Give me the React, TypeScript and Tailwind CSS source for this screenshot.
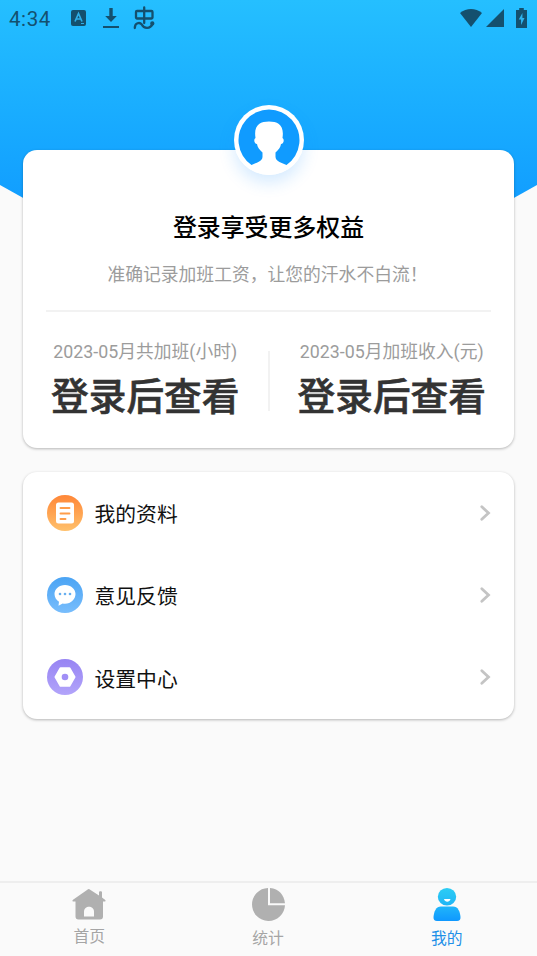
import { useState } from 'react';
import type { ReactNode } from 'react';
import { clsx } from 'clsx';

type TabKey = 'home' | 'stats' | 'mine';

const STATS = [
  { label: '2023-05月共加班(小时)', value: '登录后查看' },
  { label: '2023-05月加班收入(元)', value: '登录后查看' },
];

const MENU: { label: string; icon: ReactNode }[] = [
  { label: '我的资料', icon: <ProfileIcon /> },
  { label: '意见反馈', icon: <FeedbackIcon /> },
  { label: '设置中心', icon: <SettingsIcon /> },
];

const TABS: { key: TabKey; label: string; icon: ReactNode }[] = [
  { key: 'home', label: '首页', icon: <HomeIcon /> },
  { key: 'stats', label: '统计', icon: <PieIcon /> },
  { key: 'mine', label: '我的', icon: <MineIcon /> },
];

export default function App() {
  const [tab, setTab] = useState<TabKey>('mine');

  return (
    <div className="flex h-[956px] w-[537px] flex-col overflow-hidden bg-[#fafafa] font-[Roboto,'Noto_Sans_CJK_SC',sans-serif]">
      <header className="h-[215px] shrink-0 bg-linear-to-b from-[#25bfff] to-[#129fff] to-90% [clip-path:polygon(0_0,100%_0,100%_185px,90%_100%,10%_100%,0_185px)]">
        <StatusBar />
      </header>

      <main className="relative -mt-[65.5px] flex flex-1 flex-col gap-6 px-[23px]">
        {/* 登录卡片 */}
        <section className="flex h-[298px] flex-col items-center rounded-[14px] bg-white px-[23px] shadow-[0_1px_3px_rgba(0,0,0,0.28)]">
          <Avatar />
          <h1 className="mt-[35px] text-[23.9px] leading-9 font-medium text-black">登录享受更多权益</h1>
          <p className="mt-[15px] pr-0.5 text-[17.8px] leading-7 text-[#9c9c9c]">准确记录加班工资，让您的汗水不白流！</p>
          <div className="mt-[21px] h-0.5 w-full shrink-0 bg-[#f2f2f2]" />
          <div className="mt-[26px] flex w-[493px] items-center">
            {STATS.map((s, i) => (
              <div key={s.label} className={clsx('flex flex-1 justify-center', i > 0 && 'relative')}>
                {i > 0 && <div className="absolute top-[13px] -left-px h-[60px] w-0.5 bg-[#f2f2f2]" />}
                <div className="flex flex-col items-center">
                  <span className="text-[17.8px] leading-7 text-[#9c9c9c]">{s.label}</span>
                  <span className="mt-1 text-[37.7px] leading-[54px] font-medium text-[#333] [-webkit-text-stroke:0.6px_#333]">{s.value}</span>
                </div>
              </div>
            ))}
          </div>
        </section>

        {/* 功能列表 */}
        <section className="flex h-[247px] flex-col rounded-[14px] bg-white shadow-[0_1px_3px_rgba(0,0,0,0.28)]">
          {MENU.map((m) => (
            <button key={m.label} className="flex flex-1 items-center pr-[23px] pl-[23.5px] text-left">
              {m.icon}
              <span className="ml-3 flex-1 pt-[5px] text-[20.8px] leading-8 text-[#111]">{m.label}</span>
              <svg width="12" height="18" viewBox="0 0 12 18" fill="none" stroke="#c4c4c4" strokeWidth="2.8" strokeLinecap="round">
                <path d="M2.800 2.800 9.500 9l-6.700 6.200" />
              </svg>
            </button>
          ))}
        </section>
      </main>

      <nav className="flex h-[75.500px] shrink-0 border-t-2 border-[#eee] pt-[5.500px] pr-px">
        {TABS.map((t) => (
          <button
            key={t.key}
            onClick={() => setTab(t.key)}
            className={clsx('flex flex-1 flex-col items-center', tab === t.key ? 'text-[#1e90e8]' : 'text-[#a5a5a5]')}
          >
            {t.icon}
            <span className={clsx('text-[15.8px] leading-6', t.key === 'home' ? 'mt-1' : 'mt-1.5')}>{t.label}</span>
          </button>
        ))}
      </nav>
    </div>
  );
}

function StatusBar() {
  return (
    <div className="flex h-[36px] items-center justify-between pr-[10px] pl-[9px] text-[#14506e]">
      <div className="flex items-center">
        <span className="w-[62px] pt-0.5 text-[20.5px] tracking-[0.6px]">4:34</span>
        <svg width="15" height="16" viewBox="0 0 15 16">
          <rect width="15" height="16" rx="2" fill="currentColor" />
          <path d="m4 11.500 3.500-8 3.500 8M5.300 9h4.400" fill="none" stroke="#2eaee8" strokeWidth="1.700" />
          <path d="M10 13.500h3" stroke="#2eaee8" />
        </svg>
        <svg width="16" height="21" viewBox="0 0 16 21" className="ml-[17px]">
          <path d="M6.300 0h3.400v8h4.100L8 14 2.200 8h4.100zM0 18h16v2H0z" fill="currentColor" />
        </svg>
        <svg width="22" height="24" viewBox="0 0 22 24" fill="none" stroke="currentColor" strokeWidth="2.300" strokeLinecap="round" strokeLinejoin="round" className="ml-[14px]">
          <path d="M4 5h14.500a1 1 0 0 1 1 1v5.500a1 1 0 0 1-1 1H4a1 1 0 0 1-1-1V6a1 1 0 0 1 1-1zM11.200 1.500V17" />
          <path d="M1.800 22c0-5.500 5-6 7-3.500 2.200 4.500 8.500 4.500 10.700-.5" />
          <circle cx="19.300" cy="17.500" r="1" />
        </svg>
      </div>
      <div className="flex items-center">
        <svg width="22" height="18" viewBox="0 0 22 18" fill="currentColor">
          <path d="M0 4C6.500-1.300 15.500-1.300 22 4L11 18z" />
        </svg>
        <svg width="18" height="18" viewBox="0 0 18 18" fill="currentColor" className="ml-1">
          <path d="M18 0v18H0z" />
        </svg>
        <svg width="11" height="20" viewBox="0 0 12 20" preserveAspectRatio="none" className="ml-3">
          <path d="M3.500 0h5v2H12v18H0V2h3.500z" fill="currentColor" />
          <path d="M7 5 3 11.500h2.500V17L9.300 10H7z" fill="#2eb4ef" />
        </svg>
      </div>
    </div>
  );
}

function Avatar() {
  return (
    <div className="-mt-[45px] size-[70px] shrink-0 rounded-full shadow-[0_8px_16px_rgba(30,144,255,0.18)]">
      <svg width="70" height="70" viewBox="0 0 70 70">
        <circle cx="35" cy="35" r="35" fill="#fff" />
        <path d="M17.500 60A30.500 30.500 0 1 1 52.500 60C48 57.500 42 57 41.500 52V47.500C45 44.500 46.500 42 47 39C50 38.500 50.500 34 48.500 33C50.500 20 44 16.500 35 16.500S19.500 20 21.500 33C19.500 34 20 38.500 23 39C23.500 42 25 44.500 28.500 47.500V52C28 57 22 57.500 17.500 60Z" fill="#109bff" />
      </svg>
    </div>
  );
}

function ProfileIcon() {
  return (
    <svg width="36" height="36" viewBox="0 0 36 36">
      <defs>
        <linearGradient id="profile" x2="0" y2="1">
          <stop stopColor="#ff8738" />
          <stop offset="1" stopColor="#ffc06b" />
        </linearGradient>
      </defs>
      <circle cx="18" cy="18" r="18" fill="url(#profile)" />
      <rect x="9" y="7.500" width="18" height="21" rx="2.500" fill="#fff" />
      <path d="M13.500 13h9M13.500 18.500h9M13.500 24h5" stroke="#ff9d4a" strokeWidth="1.900" strokeLinecap="round" />
    </svg>
  );
}

function FeedbackIcon() {
  return (
    <svg width="36" height="36" viewBox="0 0 36 36">
      <defs>
        <linearGradient id="feedback" x2="0" y2="1">
          <stop stopColor="#4ba4f4" />
          <stop offset="1" stopColor="#78bdfc" />
        </linearGradient>
      </defs>
      <circle cx="18" cy="18" r="18" fill="url(#feedback)" />
      <path d="M18 8c6 0 10.500 4 10.500 9S24 26.800 18 26.800c-.8 0-1.600-.1-2.300-.3L11.500 28.800l.5-4C9.300 23 7.500 20.300 7.500 17c0-5 4.500-9 10.500-9z" fill="#fff" />
      <g fill="#68aff0">
        <circle cx="13" cy="17" r="1.300" />
        <circle cx="18" cy="17" r="1.300" />
        <circle cx="23" cy="17" r="1.300" />
      </g>
    </svg>
  );
}

function SettingsIcon() {
  return (
    <svg width="36" height="36" viewBox="0 0 36 36">
      <defs>
        <linearGradient id="settings" x2="0" y2="1">
          <stop stopColor="#9784f3" />
          <stop offset="1" stopColor="#b2a4fa" />
        </linearGradient>
      </defs>
      <circle cx="18" cy="18" r="18" fill="url(#settings)" />
      <path d="M13.500 9.200h9L27.500 18l-5 8.800h-9L8.500 18z" fill="#fff" stroke="#fff" strokeWidth="2" strokeLinejoin="round" />
      <circle cx="18" cy="18" r="3.300" fill="#a18ff6" />
    </svg>
  );
}

function HomeIcon() {
  return (
    <svg width="34" height="33" viewBox="0 0 34 33">
      <path d="M17 1 27 7.500V4c0-1 3-1 3 0v5.500l3 2.200c1 .8.500 1.800-.5 1.800H31V28.500c0 2-1 3-3 3H6.500c-2 0-3-1-3-3V13.500H1.500c-1 0-1.500-1-.5-1.800L15 2c1-.7 1.500-1 2-1z" fill="#b0b0b0" />
      <path d="M12 28.500V23.500C12 17 22 17 22 23.500V28.500z" fill="#fafafa" />
    </svg>
  );
}

function PieIcon() {
  return (
    <svg width="33" height="33" viewBox="0 0 33 33" fill="#b0b0b0">
      <path d="M16 0A16.500 16.500 0 1 0 33 17.300H16z" />
      <path d="M18 0C27 .8 32 7 33 15.300H18z" />
    </svg>
  );
}

function MineIcon() {
  return (
    <svg width="28" height="33" viewBox="0 0 28 33">
      <defs>
        <linearGradient id="mine-head" x2="0" y2="1">
          <stop stopColor="#2ccdf4" />
          <stop offset="1" stopColor="#20b5f6" />
        </linearGradient>
        <linearGradient id="mine-body" x2="0" y2="1">
          <stop stopColor="#20b5fa" />
          <stop offset="1" stopColor="#0f98ff" />
        </linearGradient>
      </defs>
      <ellipse cx="14" cy="8.800" rx="9.200" ry="8.800" fill="url(#mine-head)" />
      <path d="M11 11h6.500c-.8 3.700-5.700 3.700-6.500 0z" fill="#fff" />
      <path d="M8 18.500h12c5 0 7 5 7.500 10.500.2 2.500-1 4-3.500 4H4c-2.500 0-3.700-1.500-3.500-4C1 23.500 3 18.500 8 18.500z" fill="url(#mine-body)" />
    </svg>
  );
}
